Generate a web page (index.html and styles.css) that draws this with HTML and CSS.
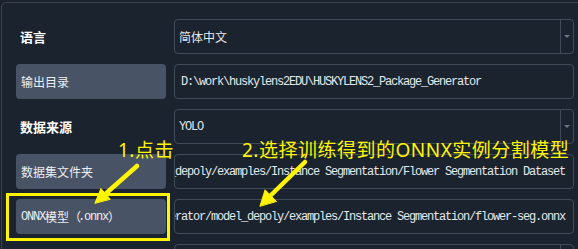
FILE: index.html
```html
<!DOCTYPE html>
<html lang="zh-CN">
<head>
<meta charset="utf-8">
<title>HUSKYLENS2 Package Generator</title>
<link rel="stylesheet" href="styles.css">
</head>
<body>
<div class="panel">
  <div class="form">
    <div class="label">语言</div>
    <div class="combo"><span class="combo-text cjk">简体中文</span><span class="drop"><span class="tri"></span></span></div>

    <div class="btn">输出目录</div>
    <div class="field"><span class="val">D:\work\huskylens2EDU\HUSKYLENS2_Package_Generator</span></div>

    <div class="label">数据来源</div>
    <div class="combo"><span class="combo-text mono">YOLO</span><span class="drop"><span class="tri"></span></span></div>

    <div class="btn">数据集文件夹</div>
    <div class="field end"><span class="val">D:/work/huskylens2EDU/HUSKYLENS2_Package_Generator/model_depoly/examples/Instance Segmentation/Flower Segmentation Dataset</span></div>

    <div class="btn"><span class="mono">ONNX</span>模型<span class="paren">（</span><span class="mono">.onnx</span><span class="paren">）</span></div>
    <div class="field end"><span class="val">D:/work/huskylens2EDU/HUSKYLENS2_Package_Generator/model_depoly/examples/Instance Segmentation/flower-seg.onnx</span></div>

    <div class="label"></div>
    <div class="combo"><span class="combo-text"></span><span class="drop"><span class="tri"></span></span></div>
  </div>
</div>

<div class="highlight"></div>
<div class="note note-1">1.点击</div>
<div class="note note-2">2.选择训练得到的ONNX实例分割模型</div>
<svg class="arrows" width="578" height="249" viewBox="0 0 578 249" xmlns="http://www.w3.org/2000/svg">
  <g fill="#fff500" stroke="#fff500" stroke-linecap="round" stroke-linejoin="round">
    <line x1="137" y1="166" x2="103" y2="196" stroke-width="4.5"/>
    <polygon points="95,203 100.9,188.5 110.1,199" stroke-width="1"/>
    <line x1="305" y1="162" x2="268" y2="198" stroke-width="4.5"/>
    <polygon points="260,206 265.1,189.8 276.3,201.2" stroke-width="1"/>
  </g>
</svg>
</body>
</html>
```

FILE: styles.css
```css
html, body {
  margin: 0;
  padding: 0;
}
body {
  width: 578px;
  height: 249px;
  overflow: hidden;
  background: #1b222c;
  position: relative;
  font-family: "Noto Sans CJK SC", "Noto Sans", sans-serif;
}
.panel {
  margin: 2px 0 0 1px;
  width: 586px;
  height: 300px;
  box-sizing: border-box;
  border: 1px solid #3a4451;
  border-radius: 5px;
  background: #1b232e;
  padding: 16px 14px;
}
.form {
  display: grid;
  grid-template-columns: 150px 400px;
  grid-auto-rows: 35px;
  column-gap: 8px;
  row-gap: 10px;
}
.label {
  display: flex;
  align-items: center;
  padding-left: 4px;
  font-size: 13px;
  font-weight: bold;
  color: #ffffff;
}
.btn {
  display: flex;
  align-items: center;
  padding-left: 5px;
  background: #485365;
  border-radius: 4px;
  font-size: 12px;
  color: #eceff3;
  white-space: nowrap;
}
.paren {
  display: inline-block;
  width: 9px;
  text-align: center;
}
.mono {
  font-family: "Liberation Mono", monospace;
  font-size: 12px;
  letter-spacing: -1.2px;
}
.combo, .field {
  box-sizing: border-box;
  border: 1px solid #414c5a;
  border-radius: 4px;
  display: flex;
  align-items: center;
  overflow: hidden;
  color: #e6e8eb;
}
.combo-text {
  flex: 1;
  padding-left: 4px;
}
.cjk {
  font-size: 12px;
}
.drop {
  width: 12px;
  align-self: stretch;
  border-left: 1px solid #414c5a;
  display: flex;
  align-items: center;
  justify-content: center;
}
.tri {
  width: 0;
  height: 0;
  border-left: 3px solid transparent;
  border-right: 3px solid transparent;
  border-top: 3px solid #6c7786;
}
.field {
  padding: 0 8px 0 6px;
}
.field.end {
  justify-content: flex-end;
  padding-left: 0;
}
.val {
  white-space: nowrap;
  flex-shrink: 0;
  font-family: "Liberation Mono", monospace;
  font-size: 12px;
  letter-spacing: -1.2px;
}
.highlight {
  position: absolute;
  left: 6px;
  top: 193px;
  width: 164px;
  height: 48px;
  box-sizing: border-box;
  border: 3px solid #fff500;
}
.note {
  position: absolute;
  top: 141px;
  font-family: "Noto Sans", "Noto Sans CJK SC", sans-serif;
  font-size: 19px;
  line-height: 19px;
  color: #fff500;
  white-space: nowrap;
}
.note-1 {
  left: 118px;
  letter-spacing: 0.5px;
}
.note-2 {
  left: 242px;
  letter-spacing: 0.5px;
}
.arrows {
  position: absolute;
  left: 0;
  top: 0;
  pointer-events: none;
}
```
